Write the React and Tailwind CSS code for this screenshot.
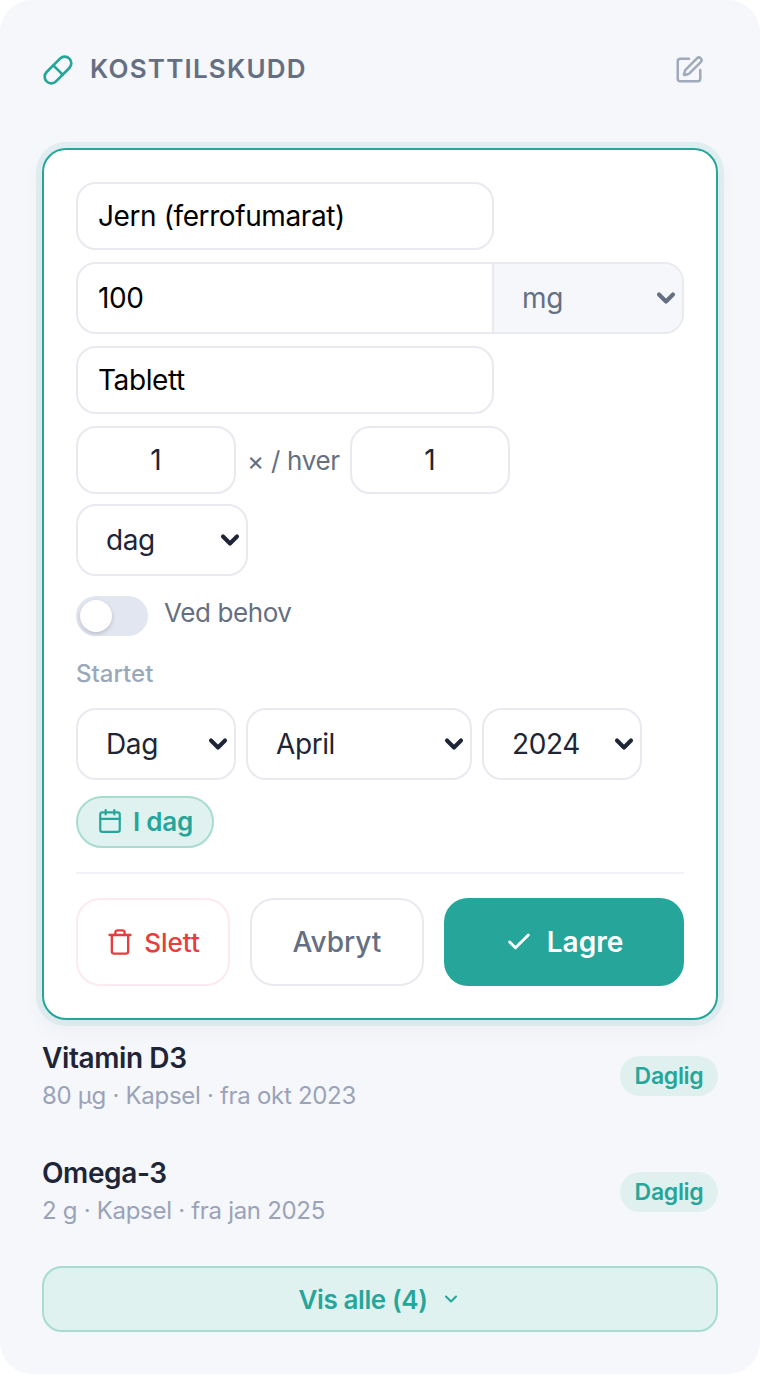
import { Pill, SquarePen, Calendar, Trash, Check, ChevronDown } from 'lucide-react'

const font = { fontFamily: 'Inter, "Liberation Sans", sans-serif' }

function Select({ value, className = '', textClass = 'text-[#1e2536]', chevronClass = 'text-[#1e2536]', pad = 'pl-[28px]' }) {
  return (
    <div className={`relative ${className}`}>
      <select
        defaultValue={value}
        className={`block h-full w-full appearance-none bg-transparent ${pad} text-[28px] tracking-[-0.4px] outline-none ${textClass}`}
      >
        <option>{value}</option>
      </select>
      <ChevronDown
        size={28}
        strokeWidth={3.5}
        className={`pointer-events-none absolute right-[2px] top-1/2 -translate-y-1/2 ${chevronClass}`}
      />
    </div>
  )
}

function Item({ name, detail, className = '', pillClass = '' }) {
  return (
    <div className={`flex items-center justify-between ${className}`}>
      <div>
        <div className="text-[28px] leading-[36px] font-semibold tracking-[-0.4px] text-[#1e2536]">{name}</div>
        <div className="mt-[2px] text-[24px] leading-[36px] tracking-[-0.3px] text-[#9aa3b8]">{detail}</div>
      </div>
      <span className={`flex h-[40px] w-[98px] items-center justify-center rounded-full bg-[#e0f0ef] text-[23px] font-semibold tracking-[-0.3px] text-[#26a69a] ${pillClass}`}>
        Daglig
      </span>
    </div>
  )
}

export default function App() {
  return (
    <div className="h-[1376px] bg-white" style={font}>
      <div className="h-[1374px] rounded-[32px] bg-[#f5f7fb] px-[42px] pt-[54px]">
        {/* Header */}
        <div className="flex h-[32px] items-center justify-between">
          <div className="flex items-center gap-[16px]">
            <Pill size={32} strokeWidth={2} className="text-[#26a69a]" />
            <span className="mb-[4px] text-[26px] font-semibold tracking-[1.2px] text-[#656f82]">KOSTTILSKUDD</span>
          </div>
          <SquarePen size={30} strokeWidth={2} className="mr-[14px] text-[#a0aabb]" />
        </div>

        {/* Edit form */}
        <div className="mt-[62px] h-[872px] rounded-[24px] border-2 border-[#26a69a] bg-white px-[32px] pt-[32px] shadow-[0_0_0_6px_rgba(38,166,154,0.09),0_8px_24px_rgba(30,37,54,0.05)]">
          <input
            readOnly
            value="Jern (ferrofumarat)"
            className="block h-[68px] w-[418px] rounded-[20px] border-2 border-[#e8eaf0] px-[20px] text-[28px] tracking-[-0.4px] text-black outline-none"
          />

          <div className="mt-[12px] flex h-[72px] w-[608px] overflow-hidden rounded-[20px] border-2 border-[#e8eaf0]">
            <input readOnly value="100" className="w-[414px] px-[20px] text-[28px] tracking-[-0.4px] text-black outline-none" />
            <Select
              value="mg"
              className="flex-1 border-l-2 border-[#e8eaf0] bg-[#f5f7fb]"
              textClass="text-[#656f82]"
              chevronClass="text-[#656f82]"
            />
          </div>

          <input
            readOnly
            value="Tablett"
            className="mt-[12px] block h-[68px] w-[418px] rounded-[20px] border-2 border-[#e8eaf0] px-[20px] text-[28px] tracking-[-0.4px] text-black outline-none"
          />

          <div className="mt-[12px] flex items-center">
            <input
              readOnly
              value="1"
              className="h-[68px] w-[160px] rounded-[20px] border-2 border-[#e8eaf0] text-center text-[28px] text-[#1e2536] outline-none"
            />
            <span className="ml-[11px] mr-[10px] text-[26px] tracking-[-0.3px] text-[#656f82]">× / hver</span>
            <input
              readOnly
              value="1"
              className="h-[68px] w-[160px] rounded-[20px] border-2 border-[#e8eaf0] text-center text-[28px] text-[#1e2536] outline-none"
            />
          </div>

          <Select value="dag" className="mt-[10px] h-[72px] w-[172px] rounded-[20px] border-2 border-[#e8eaf0]" />

          <div className="mt-[20px] flex h-[40px] items-center gap-[16px]">
            <div className="relative h-[40px] w-[72px] rounded-full bg-[#e2e6f0]">
              <span className="absolute left-[4px] top-[4px] h-[32px] w-[32px] rounded-full bg-white shadow-[0_2px_4px_rgba(30,37,54,0.2)]" />
            </div>
            <span className="mb-[6px] text-[26px] leading-[32px] tracking-[-0.4px] text-[#656f82]">Ved behov</span>
          </div>

          <div className="mt-[20px] text-[24px] leading-[36px] font-medium text-[#9aa8bc]">Startet</div>

          <div className="mt-[16px] flex gap-[10px]">
            <Select value="Dag" className="h-[72px] w-[160px] rounded-[20px] border-2 border-[#e8eaf0]" />
            <Select value="April" className="h-[72px] w-[226px] rounded-[20px] border-2 border-[#e8eaf0]" />
            <Select value="2024" className="h-[72px] w-[160px] rounded-[20px] border-2 border-[#e8eaf0]" />
          </div>

          <button className="mt-[16px] flex h-[52px] w-[138px] items-center justify-center gap-[10px] rounded-full border-2 border-[#a8dcd1] bg-[#e0f2f0] pb-[2px] text-[26px] font-semibold tracking-[-0.2px] text-[#26a69a]">
            <Calendar size={26} strokeWidth={2} />
            I dag
          </button>

          <div className="mt-[24px] h-[2px] bg-[#f0f2f7]" />

          <div className="mt-[24px] flex gap-[20px]">
            <button className="flex h-[88px] w-[154px] items-center justify-center gap-[10px] rounded-[24px] border-2 border-[#fdeaee] bg-white text-[26px] font-medium text-[#e53e3e]">
              <Trash size={28} strokeWidth={2} />
              Slett
            </button>
            <button className="h-[88px] w-[174px] rounded-[24px] border-2 border-[#e8eaf0] bg-white text-[28px] font-medium text-[#656f82]">
              Avbryt
            </button>
            <button className="flex h-[88px] w-[240px] items-center justify-center gap-[14px] rounded-[24px] bg-[#26a69a] text-[28px] font-semibold text-white">
              <Check size={28} strokeWidth={2.5} />
              Lagre
            </button>
          </div>
        </div>

        {/* Supplements */}
        <Item name="Vitamin D3" detail="80 µg · Kapsel · fra okt 2023" className="mt-[20px]" pillClass="mb-[2px]" />
        <Item name="Omega-3" detail="2 g · Kapsel · fra jan 2025" className="mt-[41px]" />

        <button className="mt-[37px] flex h-[66px] w-full items-center justify-center gap-[14px] rounded-[20px] border-2 border-[#a8dcd1] bg-[#e0f2ef] text-[26px] font-semibold tracking-[-0.4px] text-[#26a69a]">
          Vis alle (4)
          <ChevronDown size={20} strokeWidth={2.5} />
        </button>
      </div>
    </div>
  )
}
